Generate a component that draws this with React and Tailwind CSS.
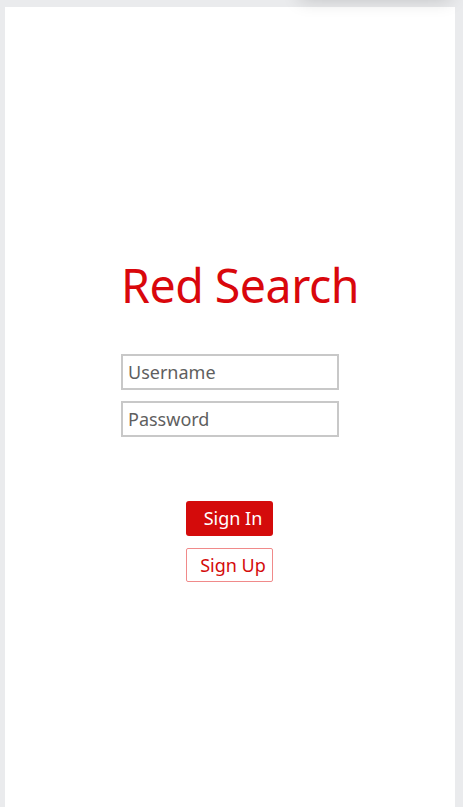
import React from 'react';

export default function App() {
  return (
    <div className="relative min-h-screen bg-[#eaebed] overflow-hidden" style={{ fontFamily: '"Noto Sans", "Open Sans", sans-serif' }}>
      <div className="absolute -top-[24px] left-[300px] w-[150px] h-[24px] bg-[#eaebed] shadow-[0_0_18px_rgba(0,0,0,0.18)]" />
      <div className="ml-[5px] mt-[7px] w-[450px] min-h-[800px] bg-white flex flex-col items-center pt-[250px]">
        <h1 className="pl-[20px] text-[46.5px] leading-[56px] text-[#d9070c] font-normal tracking-[-0.5px]">Red Search</h1>
        <div className="mt-[41px] flex flex-col gap-[11px]">
          <input
            placeholder="Username"
            className="w-[218px] h-[36px] border-2 border-[#c8c8c8] px-[5px] text-[18px] text-[#555] placeholder:text-[#5f5f5f] outline-none"
          />
          <input
            placeholder="Password"
            type="password"
            className="w-[218px] h-[36px] border-2 border-[#c8c8c8] px-[5px] text-[18px] text-[#555] placeholder:text-[#5f5f5f] outline-none"
          />
        </div>
        <div className="mt-[64px] flex flex-col gap-[12px] pr-[1px]">
          <button className="w-[87px] h-[35px] bg-[#d40b0b] text-white text-[18px] rounded-[3px] pl-[7px]">Sign In</button>
          <button className="w-[87px] h-[34px] bg-white border border-[#f08a8a] text-[#d40b0b] text-[18px] rounded-[2px] pl-[7px]">Sign Up</button>
        </div>
      </div>
    </div>
  );
}
